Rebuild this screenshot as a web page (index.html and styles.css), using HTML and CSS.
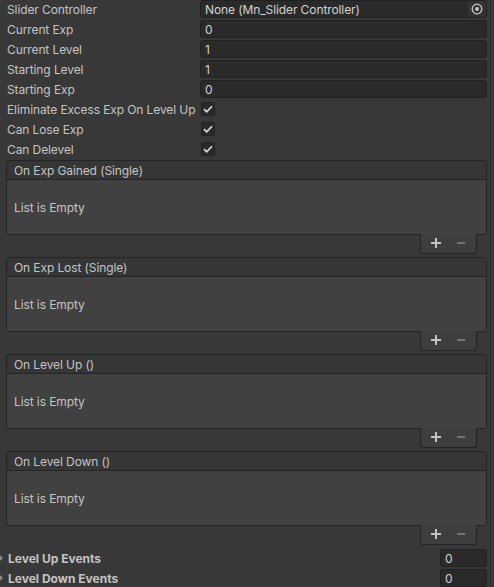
FILE: index.html
```html
<!DOCTYPE html>
<html lang="en">
<head>
    <meta charset="UTF-8">
    <title>Level System Inspector</title>
    <link rel="stylesheet" href="styles.css">
</head>
<body>
    <div class="inspector">
        <div class="fields">
            <div class="row">
                <span class="label">Slider Controller</span>
                <div class="field object-field">
                    <span class="value">None (Mn_Slider Controller)</span>
                    <span class="picker">
                        <svg width="12" height="12" viewBox="0 0 12 12"><circle cx="6" cy="6" r="4.8" fill="none" stroke="#c8c8c8" stroke-width="1.3"/><circle cx="6" cy="6" r="1.9" fill="#c8c8c8"/></svg>
                    </span>
                </div>
            </div>
            <div class="row">
                <span class="label">Current Exp</span>
                <div class="field"><span class="value">0</span></div>
            </div>
            <div class="row">
                <span class="label">Current Level</span>
                <div class="field"><span class="value">1</span></div>
            </div>
            <div class="row">
                <span class="label">Starting Level</span>
                <div class="field"><span class="value">1</span></div>
            </div>
            <div class="row">
                <span class="label">Starting Exp</span>
                <div class="field"><span class="value">0</span></div>
            </div>
            <div class="row">
                <span class="label">Eliminate Excess Exp On Level Up</span>
                <span class="checkbox"><svg width="10" height="8" viewBox="0 0 10 8"><path d="M1 4.2 L3.7 6.8 L9 1.2" fill="none" stroke="#e0e0e0" stroke-width="1.6"/></svg></span>
            </div>
            <div class="row">
                <span class="label">Can Lose Exp</span>
                <span class="checkbox"><svg width="10" height="8" viewBox="0 0 10 8"><path d="M1 4.2 L3.7 6.8 L9 1.2" fill="none" stroke="#e0e0e0" stroke-width="1.6"/></svg></span>
            </div>
            <div class="row">
                <span class="label">Can Delevel</span>
                <span class="checkbox"><svg width="10" height="8" viewBox="0 0 10 8"><path d="M1 4.2 L3.7 6.8 L9 1.2" fill="none" stroke="#e0e0e0" stroke-width="1.6"/></svg></span>
            </div>
        </div>

        <div class="event">
            <div class="event-box">
                <div class="event-header">On Exp Gained (Single)</div>
                <div class="event-body">List is Empty</div>
            </div>
            <div class="event-footer">
                <svg width="10" height="10" viewBox="0 0 10 10"><path d="M5 0 V10 M0 5 H10" stroke="#c4c4c4" stroke-width="2"/></svg>
                <svg width="10" height="10" viewBox="0 0 10 10"><path d="M1 5 H9" stroke="#737373" stroke-width="2"/></svg>
            </div>
        </div>

        <div class="event">
            <div class="event-box">
                <div class="event-header">On Exp Lost (Single)</div>
                <div class="event-body">List is Empty</div>
            </div>
            <div class="event-footer">
                <svg width="10" height="10" viewBox="0 0 10 10"><path d="M5 0 V10 M0 5 H10" stroke="#c4c4c4" stroke-width="2"/></svg>
                <svg width="10" height="10" viewBox="0 0 10 10"><path d="M1 5 H9" stroke="#737373" stroke-width="2"/></svg>
            </div>
        </div>

        <div class="event">
            <div class="event-box">
                <div class="event-header">On Level Up ()</div>
                <div class="event-body">List is Empty</div>
            </div>
            <div class="event-footer">
                <svg width="10" height="10" viewBox="0 0 10 10"><path d="M5 0 V10 M0 5 H10" stroke="#c4c4c4" stroke-width="2"/></svg>
                <svg width="10" height="10" viewBox="0 0 10 10"><path d="M1 5 H9" stroke="#737373" stroke-width="2"/></svg>
            </div>
        </div>

        <div class="event">
            <div class="event-box">
                <div class="event-header">On Level Down ()</div>
                <div class="event-body">List is Empty</div>
            </div>
            <div class="event-footer">
                <svg width="10" height="10" viewBox="0 0 10 10"><path d="M5 0 V10 M0 5 H10" stroke="#c4c4c4" stroke-width="2"/></svg>
                <svg width="10" height="10" viewBox="0 0 10 10"><path d="M1 5 H9" stroke="#737373" stroke-width="2"/></svg>
            </div>
        </div>

        <div class="foldouts">
            <div class="row foldout">
                <span class="arrow"></span>
                <span class="label bold">Level Up Events</span>
                <div class="field int-field"><span class="value">0</span></div>
            </div>
            <div class="row foldout">
                <span class="arrow"></span>
                <span class="label bold">Level Down Events</span>
                <div class="field int-field"><span class="value">0</span></div>
            </div>
        </div>
    </div>
</body>
</html>
```

FILE: styles.css
```css
:root {
    --bg-color: #383838;
    --text-color: #c4c4c4;
    --value-color: #d2d2d2;
    --field-bg: #2a2a2a;
    --field-border: #212121;
    --box-bg: #414141;
    --box-header: #363636;
    --box-border: #242424;
}

html, body {
    height: 100%;
}

body {
    margin: 0;
    background-color: var(--bg-color);
    color: var(--text-color);
    font-family: Inter, "Noto Sans", sans-serif;
    font-size: 12px;
    letter-spacing: -0.1px;
    overflow: hidden;
}

.inspector {
    width: 491px;
    height: 100%;
    border-right: 1px solid #2e2e2e;
    box-sizing: border-box;
    padding-right: 3px;
}

.fields {
    margin-top: -1px;
}

.row {
    display: flex;
    align-items: center;
    height: 20px;
    padding-left: 7px;
}

.label {
    width: 193px;
    flex-shrink: 0;
    white-space: nowrap;
}

.field {
    flex: 1;
    display: flex;
    align-items: center;
    height: 16px;
    background-color: var(--field-bg);
    border: 1px solid var(--field-border);
    border-radius: 3px;
    overflow: hidden;
}

.value {
    flex: 1;
    padding-left: 4px;
    color: var(--value-color);
    white-space: nowrap;
}

.picker {
    width: 18px;
    height: 16px;
    display: flex;
    align-items: center;
    justify-content: center;
    background-color: #333333;
}

.checkbox {
    width: 12px;
    height: 12px;
    margin-left: 1px;
    display: flex;
    align-items: center;
    justify-content: center;
    background-color: var(--field-bg);
    border: 1px solid var(--field-border);
    border-radius: 2px;
}

/* UnityEvent drawers */
.event {
    margin: 0 0 3px 6px;
}

.fields + .event {
    margin-top: 1px;
}

.event-box {
    border: 1px solid var(--box-border);
    border-radius: 3px;
    overflow: hidden;
}

.event-header {
    height: 18px;
    line-height: 19px;
    padding-left: 7px;
    background-color: var(--box-header);
    border-bottom: 1px solid var(--box-border);
}

.event-body {
    height: 54px;
    padding-left: 7px;
    background-color: var(--box-bg);
    display: flex;
    align-items: center;
    box-sizing: border-box;
}

.event-footer {
    width: 57px;
    height: 20px;
    margin: -1px 10px 0 auto;
    display: flex;
    align-items: center;
    justify-content: center;
    gap: 15px;
    padding-bottom: 1px;
    box-sizing: border-box;
    background-color: #3e3e3e;
    border: 1px solid var(--box-border);
    border-top: none;
    border-radius: 0 0 3px 3px;
}

.foldouts .row {
    padding-left: 0;
}

.arrow {
    width: 0;
    height: 0;
    border-top: 3px solid transparent;
    border-bottom: 3px solid transparent;
    border-left: 3px solid #8a8a8a;
    margin-right: 5px;
}

.bold {
    font-weight: 700;
    letter-spacing: 0;
    width: 432px;
}

.int-field {
    flex: 0 0 45px;
}
```
